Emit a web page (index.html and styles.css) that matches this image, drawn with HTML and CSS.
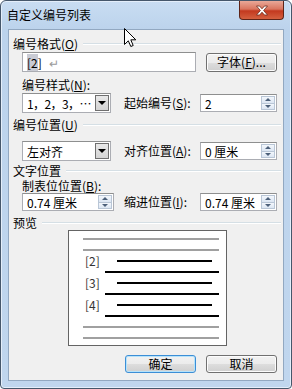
FILE: index.html
```html
<!DOCTYPE html>
<html>
<head>
    <title>自定义编号列表</title>
    <link rel="stylesheet" href="styles.css">
</head>
<body>
    <div class="window">
        <div class="titlebar">
            <span class="title">自定义编号列表</span>
            <div class="close">
                <svg width="14" height="11" viewBox="0 0 14 11">
                    <path d="M1.5 1 L4.5 1 L7 3.8 L9.5 1 L12.5 1 L8.6 5.5 L12.5 10 L9.5 10 L7 7.2 L4.5 10 L1.5 10 L5.4 5.5 Z" fill="#fff" stroke="#6b2a1c" stroke-width="0.8"/>
                </svg>
            </div>
        </div>
        <div class="client">
            <div class="group-head h-format"><span>编号格式(<u>O</u>)</span></div>
            <div class="format-row">
                <div class="textbox format-box"><span class="field">[2</span>]<span class="para">↵</span></div>
                <button class="btn font-btn">字体(<u>F</u>)...</button>
            </div>
            <div class="label l-style">编号样式(<u>N</u>):</div>
            <div class="grid row-style">
                <div class="combo"><span class="value seq">1，2，3，⋯</span><span class="drop"></span></div>
                <div class="label">起始编号(<u>S</u>):</div>
                <div class="spin"><span class="value">2</span><span class="arrows"><i class="up"></i><i class="down"></i></span></div>
            </div>
            <div class="group-head h-pos"><span>编号位置(<u>U</u>)</span></div>
            <div class="grid row-align">
                <div class="combo"><span class="value">左对齐</span><span class="drop"></span></div>
                <div class="label">对齐位置(<u>A</u>):</div>
                <div class="spin"><span class="value">0 厘米</span><span class="arrows"><i class="up"></i><i class="down"></i></span></div>
            </div>
            <div class="group-head h-text"><span>文字位置</span></div>
            <div class="label l-tab">制表位位置(<u>B</u>):</div>
            <div class="grid row-indent">
                <div class="spin spin-wide"><span class="value">0.74 厘米</span><span class="arrows"><i class="up"></i><i class="down"></i></span></div>
                <div class="label">缩进位置(<u>I</u>):</div>
                <div class="spin"><span class="value">0.74 厘米</span><span class="arrows"><i class="up"></i><i class="down"></i></span></div>
            </div>
            <div class="group-head h-preview"><span>预览</span></div>
            <div class="preview">
                <div class="pv-row"><span class="ln gray"></span></div>
                <div class="pv-row"><span class="ln gray"></span></div>
                <div class="pv-row"><span class="num">[2]</span><span class="ln short"></span></div>
                <div class="pv-row"><span class="ln long"></span></div>
                <div class="pv-row"><span class="num">[3]</span><span class="ln short"></span></div>
                <div class="pv-row"><span class="ln long"></span></div>
                <div class="pv-row"><span class="num">[4]</span><span class="ln short"></span></div>
                <div class="pv-row"><span class="ln long"></span></div>
                <div class="pv-row"><span class="ln gray"></span></div>
                <div class="pv-row"><span class="ln gray"></span></div>
            </div>
            <div class="actions">
                <button class="btn default">确定</button>
                <button class="btn">取消</button>
            </div>
        </div>
        <svg class="cursor" width="13" height="20" viewBox="0 0 13 20">
            <path d="M0.5 0.5 L0.5 16.5 L4.3 12.8 L6.8 18.5 L9.2 17.5 L6.8 11.8 L11.8 11.8 Z" fill="#fff" stroke="#000" stroke-width="1"/>
        </svg>
    </div>
</body>
</html>
```

FILE: styles.css
```css
body {
    margin: 0;
    font-family: "Noto Sans CJK SC", "Noto Sans", sans-serif;
    font-size: 12px;
    color: #000;
    background: #fff;
}
u {
    text-underline-offset: 1px;
}

/* window frame */
.window {
    position: relative;
    width: 292px;
    height: 389px;
    box-sizing: border-box;
    border: 1px solid #46576b;
    border-radius: 6px 6px 4px 4px;
    background: linear-gradient(to bottom, #c9ddf2 0, #bcd3ec 28px, #c0d6ee 100%);
    box-shadow: inset 0 0 0 1px #e4eefa;
    overflow: hidden;
}
.titlebar {
    height: 28px;
    display: flex;
    justify-content: space-between;
    align-items: flex-start;
    padding-left: 6px;
}
.title {
    line-height: 28px;
}
.close {
    width: 45px;
    height: 19px;
    margin-right: 7px;
    box-sizing: border-box;
    border: 1px solid #5e2418;
    border-top: none;
    border-radius: 0 0 4px 4px;
    background: linear-gradient(to bottom, #e9a898 0, #d9755f 45%, #c3391f 55%, #d4603f 100%);
    display: flex;
    align-items: center;
    justify-content: center;
}
.client {
    margin: 0 7px;
    height: 352px;
    box-sizing: border-box;
    border: 1px solid #92a8c1;
    background: #f0f0f0;
}

/* labels and group headings */
.label {
    line-height: 14px;
    white-space: nowrap;
}
.group-head {
    display: flex;
    align-items: center;
    line-height: 14px;
    padding-left: 4px;
    padding-right: 2px;
}
.group-head::after {
    content: "";
    flex: 1;
    margin-left: 5px;
    border-top: 1px solid #d5dfe5;
    border-bottom: 1px solid #fff;
}
.h-format { margin-top: 7px; }
.h-pos { margin-top: 5px; }
.h-text { margin-top: 3px; line-height: 13px; }
.h-preview { margin-top: 5px; }
.l-style { margin: 6px 0 1px 13px; }
.l-tab { margin: 2px 0 0 13px; line-height: 13px; }

/* controls */
.textbox, .combo, .spin {
    box-sizing: border-box;
    background: #fff;
    border: 1px solid #abadb3;
    border-top-color: #8e8f8f;
    display: flex;
    align-items: center;
}
.value {
    flex: 1;
    padding-left: 4px;
    white-space: nowrap;
    overflow: hidden;
}
.seq {
    letter-spacing: -0.6px;
}
.format-row {
    display: flex;
    align-items: center;
    margin: 1px 0 0 13px;
}
.format-box {
    width: 174px;
    height: 20px;
    padding-left: 4px;
}
.field {
    background: #c9cbd4;
}
.para {
    color: #9a9a9a;
    margin-left: 7px;
}
.btn {
    font: inherit;
    color: #000;
    box-sizing: border-box;
    height: 19px;
    padding: 0;
    border: 1px solid #707070;
    border-radius: 3px;
    background: linear-gradient(to bottom, #f2f2f2 0, #ebebeb 50%, #dddddd 51%, #cfcfcf 100%);
    box-shadow: inset 0 0 0 1px #fcfcfc;
    line-height: 16px;
}
.font-btn {
    width: 71px;
    margin-left: 10px;
}
.grid {
    display: grid;
    grid-template-columns: 102px 76px 77px;
    align-items: center;
    padding-left: 13px;
}
.row-style { margin-top: 0; }
.row-align { margin-top: 9px; }
.row-indent { margin-top: 1px; }
.combo {
    width: 89px;
    height: 20px;
}
.drop {
    flex: none;
    width: 14px;
    height: 16px;
    margin-right: 1px;
    box-sizing: border-box;
    border: 1px solid #6f6f6f;
    background: linear-gradient(to bottom, #e8e8e8, #d4d4d4);
    display: flex;
    align-items: center;
    justify-content: center;
}
.drop::after {
    content: "";
    border-left: 4px solid transparent;
    border-right: 4px solid transparent;
    border-top: 4px solid #000;
}
.spin {
    width: 77px;
    height: 18px;
}
.spin-wide {
    width: 92px;
}
.arrows {
    flex: none;
    width: 14px;
    height: 14px;
    margin-right: 1px;
    display: flex;
    flex-direction: column;
}
.arrows i {
    flex: 1;
    border: 1px solid #b9c6d6;
    background: linear-gradient(to bottom, #f3f7fc, #dce6f3);
    display: flex;
    align-items: center;
    justify-content: center;
}
.arrows i + i {
    border-top: none;
}
.arrows .up::after {
    content: "";
    border-left: 3px solid transparent;
    border-right: 3px solid transparent;
    border-bottom: 3px solid #4c607a;
}
.arrows .down::after {
    content: "";
    border-left: 3px solid transparent;
    border-right: 3px solid transparent;
    border-top: 3px solid #4c607a;
}

/* preview */
.preview {
    width: 159px;
    height: 116px;
    box-sizing: border-box;
    margin-left: 59px;
    padding-top: 3px;
    border: 1px solid #646464;
    background: #fff;
}
.pv-row {
    position: relative;
    height: 11px;
}
.ln {
    position: absolute;
    top: 4px;
    height: 2px;
}
.ln.gray {
    left: 14px;
    width: 136px;
    background: #a0a0a0;
}
.ln.short {
    left: 48px;
    width: 95px;
    background: #000;
}
.ln.long {
    left: 36px;
    width: 114px;
    background: #000;
}
.num {
    position: absolute;
    left: 16px;
    top: -1px;
    line-height: 12px;
    color: #333;
}

/* dialog buttons */
.actions {
    display: flex;
    justify-content: flex-end;
    gap: 10px;
    margin-top: 9px;
    padding-right: 6px;
}
.actions .btn {
    width: 71px;
    height: 18px;
}
.btn.default {
    border-color: #3c8ed6;
    box-shadow: inset 0 0 0 1px #b6e3fb;
}

.cursor {
    position: absolute;
    left: 123px;
    top: 27px;
}
```
